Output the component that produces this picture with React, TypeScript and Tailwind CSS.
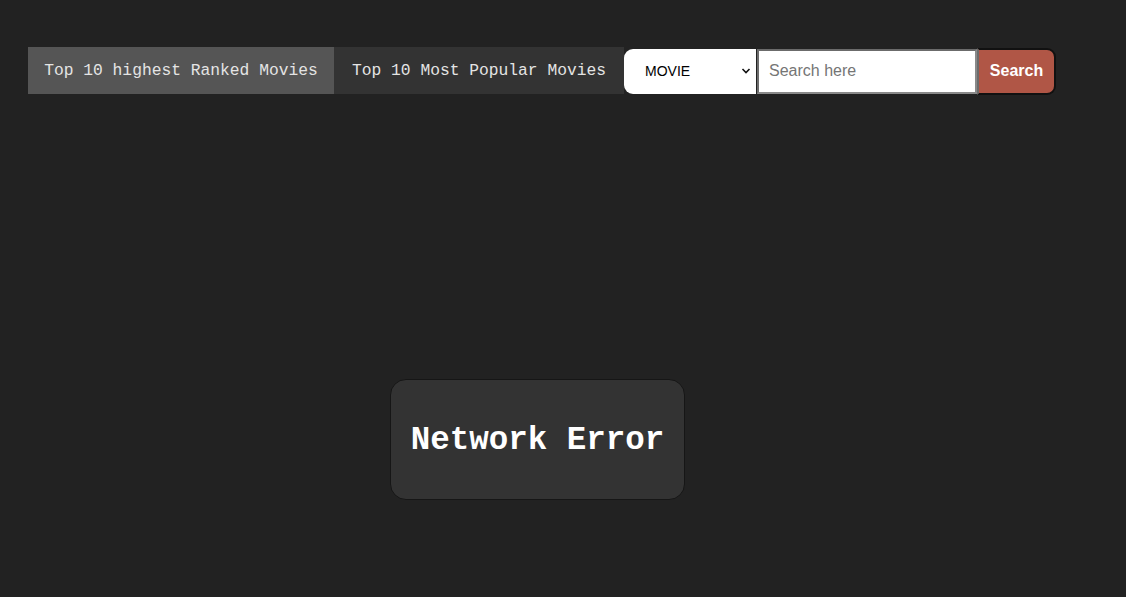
import React from "react";

export default function App() {
  return (
    <div className="min-h-[597px] w-full bg-[#222222] pt-[47px]" style={{ fontFamily: '"Liberation Mono", monospace' }}>
      <nav className="ml-[28px] flex h-[47px] items-stretch">
        <a className="flex w-[306px] items-center justify-center bg-[#555555] pt-[2px] text-[16.3px] text-[#e4e4e4]">
          Top 10 highest Ranked Movies
        </a>
        <a className="flex w-[290px] items-center justify-center bg-[#333333] pt-[2px] text-[16.3px] text-[#e4e4e4]">
          Top 10 Most Popular Movies
        </a>
        <div className="flex items-center" style={{ fontFamily: '"Liberation Sans", Arial, sans-serif' }}>
          <div className="relative mt-[1px] flex h-[45px] w-[132px] items-center rounded-l-[9px] bg-white pl-[21px] text-[14px] text-black">
            MOVIE
            <svg className="absolute right-[5px] top-[18px]" width="10" height="8" viewBox="0 0 10 8">
              <path d="M1.5 2 L5 5.5 L8.5 2" fill="none" stroke="#111" strokeWidth="1.6" />
            </svg>
          </div>
          <div className="ml-[1px] mt-[1px] flex h-[45px] w-[220px] items-center border-2 border-l-[#6b6b6b] border-t-[#6b6b6b] border-r-[#8a8a8a] border-b-[#8a8a8a] bg-white pl-[10px] text-[16px] text-[#757575]">
            Search here
          </div>
          <button className="mt-[1px] flex h-[47px] w-[79px] items-center justify-center rounded-r-[9px] border-2 border-[#111111] border-l-[#6b6b6b] bg-[#b05646] text-[16px] font-bold text-white">
            Search
          </button>
        </div>
      </nav>
      <div className="ml-[390px] mt-[285px] flex h-[121px] w-[295px] items-center justify-center rounded-[16px] border border-[#161616] bg-[#333333] pt-[3px]">
        <span className="text-[32.5px] font-bold text-white">Network Error</span>
      </div>
    </div>
  );
}
